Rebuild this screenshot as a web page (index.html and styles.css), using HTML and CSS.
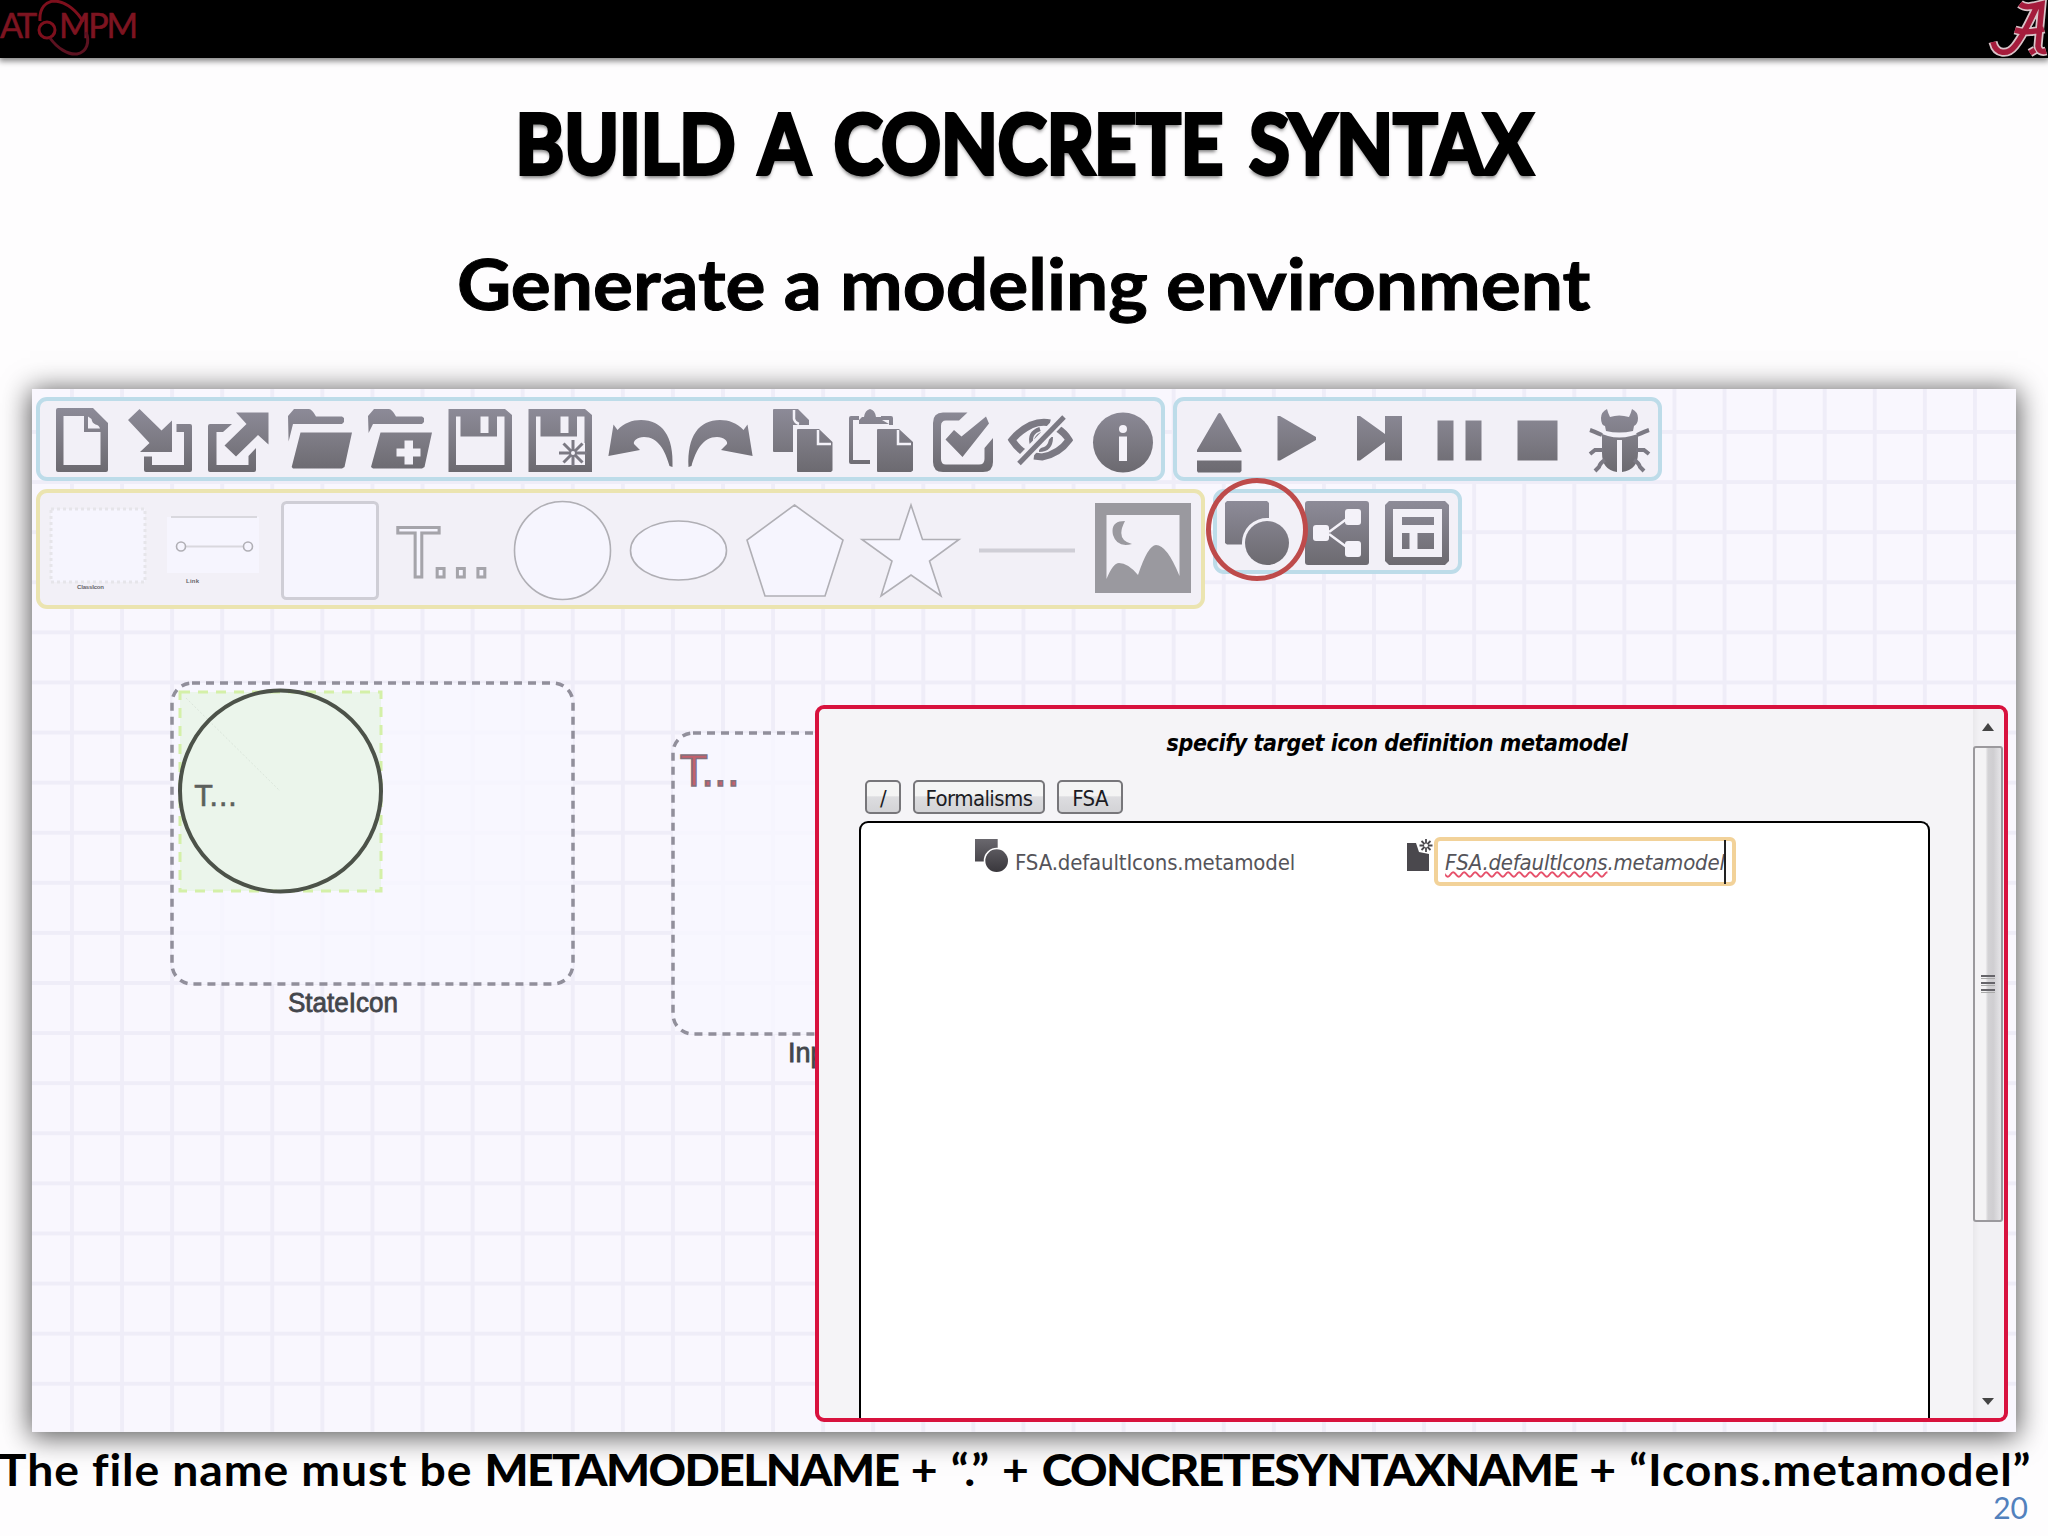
FILE: index.html
```html
<!DOCTYPE html>
<html lang="en">
  <head>
    <meta charset="UTF-8" />
    <title>Build a concrete syntax</title>
    <link rel="stylesheet" href="styles.css">
  </head>

  <body>
    <!-- shared gradients -->
    <svg class="defs" width="0" height="0">
      <defs>
        <linearGradient id="steel" gradientUnits="userSpaceOnUse" x1="0" y1="0" x2="0" y2="64">
          <stop offset="0" stop-color="#8d8b98" />
          <stop offset="1" stop-color="#6c6a70" />
        </linearGradient>
        <linearGradient id="dark" gradientUnits="userSpaceOnUse" x1="0" y1="0" x2="0" y2="64">
          <stop offset="0" stop-color="#6a686e" />
          <stop offset="1" stop-color="#39373c" />
        </linearGradient>
      </defs>
    </svg>

    <header class="topbar">
      <svg class="logo" width="144" height="58" viewBox="0 0 144 58">
        <text class="logo-text" x="0" y="38" textLength="37">AT</text>
        <text class="logo-text" x="59" y="38" textLength="79">MPM</text>
        <circle cx="47" cy="30" r="8" />
        <path d="M40 21C39 8 46 1 55 1C67 2 78 12 83 22" />
        <path class="dim" d="M50 38C57 48 68 55 77 54C87 52 90 42 86 32" />
      </svg>
      <svg class="crest" width="60" height="58" viewBox="0 0 60 58">
        <path class="crest-edge" d="M32 4C37 8 43 7 54 4L50 46Q51 53 58 51M49 6C42 21 35 36 27 46C20 55 8 55 5 42M27 30Q40 34 56 29M42 53L47 50" />
        <path class="crest-fill" d="M32 4C37 8 43 7 54 4L50 46Q51 53 58 51M49 6C42 21 35 36 27 46C20 55 8 55 5 42M27 30Q40 34 56 29M42 53L47 50" />
      </svg>
    </header>

    <h1 class="title"><span>BUILD A CONCRETE SYNTAX</span></h1>
    <h2 class="subtitle"><span>Generate a modeling environment</span></h2>

    <main class="workspace">
      <svg class="canvas" width="1984" height="1043" viewBox="32 389 1984 1043">
        <rect class="icon-box" x="172" y="683" width="401" height="301" rx="20" />
        <rect class="selection" x="180" y="692" width="201" height="199" />
        <path class="hair" d="M186 698L280 791" />
        <circle class="state" cx="280.500" cy="791" r="100.500" />
        <text class="label-t" x="195" y="806" textLength="42">T...</text>
        <text class="caption" x="288" y="1012" textLength="110" lengthAdjust="spacingAndGlyphs">StateIcon</text>
        <rect class="icon-box" x="673" y="733" width="401" height="301" rx="20" />
        <text class="label-red" x="681" y="786" textLength="59">T...</text>
        <text class="caption" x="788" y="1062">InputIcon</text>
      </svg>

      <div class="toolbars">
        <div class="row">
          <div class="toolbar main">
            <svg class="icon" viewBox="0 0 64 64"><path fill-rule="evenodd" d="M10 0H45L60 15V62Q60 64 58 64H10Q8 64 8 62V2Q8 0 10 0ZM15.500 8V57H52.500V24H36V8ZM40 8.500V20.500H52Q51 17 47.500 16.500Q44 15 43.500 11Z" /></svg>
            <svg class="icon" viewBox="0 0 64 64"><path d="M0 12L11.500 1L33.500 22.500L44 12.500V44H12L21.500 35ZM48.500 16H62Q64 16 64 18V62Q64 64 62 64H18Q16 64 16 62V48.500H24V57H56V24H48.500Z" /></svg>
            <svg class="icon" viewBox="0 0 64 64"><path d="M2 16H24L15 24H8.500V57H40.500V48L48 40V62Q48 64 46 64H2Q0 64 0 62V18Q0 16 2 16ZM28 4.500H60.500V36.500L50 27L28 48.500L16.500 37.500L38.500 16Z" /></svg>
            <svg class="icon" viewBox="0 0 64 64"><path d="M0 8L6 1H21Q24 1 28 8.500H54L56 10V14L54 16H5L.6 33.500ZM12.500 24.500H64L56.500 59L54 60.500H5L3.700 59Z" /></svg>
            <svg class="icon" viewBox="0 0 64 64"><path fill-rule="evenodd" d="M0 8L6 1H21Q24 1 28 8.500H54L56 10V14L54 16H5L.6 25ZM12.500 24.500H64L56.500 59L54 60.500H5L3 59ZM36.500 32.500V40.500H28.500V48.500H36.500V56.500H45V48.500H52.500V40.500H45V32.500Z" /></svg>
            <svg class="icon" viewBox="0 0 64 64"><path fill-rule="evenodd" d="M.5 1H57L64 7V64H.5ZM8 8.500V57H56.500V8.500H49V28.500H12.500V8.500ZM32.500 8.500V25H40.500V8.500Z" /></svg>
            <svg class="icon" viewBox="0 0 64 64">
              <path fill-rule="evenodd" d="M.5 1H57L64 7V64H.5ZM8 8.500V57H56.500V8.500H49V28.500H12.500V8.500ZM32.500 8.500V25H40.500V8.500Z" />
              <path class="paper" d="M45 32L49 36L57 35V57H36L34 45Z" />
              <path class="thin" d="M45 32V58M31 45H59M35.500 35.500L54.500 54.500M54.500 35.500L35.500 54.500" />
              <circle class="paper" cx="45" cy="45" r="2" />
            </svg>
            <svg class="icon" viewBox="0 0 64 64"><path d="M5.500 16.500L9.500 22C16 15 24 12 33 12C54 12 66 28 64.500 59L61.500 58C57 42 50 29 36 29C29 29 25 33 26 36L32 42L.4 48Z" /></svg>
            <svg class="icon" viewBox="0 0 64 64"><path transform="matrix(-1 0 0 1 65 0)" d="M5.500 16.500L9.500 22C16 15 24 12 33 12C54 12 66 28 64.500 59L61.500 58C57 42 50 29 36 29C29 29 25 33 26 36L32 42L.4 48Z" /></svg>
            <svg class="icon" viewBox="0 0 64 64">
              <path d="M6 1H30L41 12V17H25V44H6Q5 44 5 43V2Q5 1 6 1ZM30 21H51L64.500 34V62.500L63 64H30Q29 64 29 63V22Q29 21 30 21Z" />
              <path class="fold" d="M26 2V11Q27 15 31 16M50 22V36H63" />
            </svg>
            <svg class="icon" viewBox="0 0 64 64">
              <path d="M14 9H16Q17 2 22 1Q27 2 28 9H34V12L41 16H11V12Z" />
              <path d="M11 8H3Q1 8 1 10V54Q1 56 3 56H22V52H5V12H11ZM33 8H43Q45 8 45 10V17H41V12H33ZM30 21H51L65 34V62.500L63 64H30Q29 64 29 63V22Q29 21 30 21Z" />
              <path class="fold" d="M50 22V36H63" />
            </svg>
            <svg class="icon" viewBox="0 0 64 64"><path d="M39.500 4.500L31 12.500H18Q13 12.500 13 18V51Q13 56.500 18 56.500H51Q56.500 56.500 56.500 51V40L65 30V54Q65 64 55 64H15Q5 64 5 54V15Q5 4.500 15 4.500ZM17.500 31.500L26 22L33.500 28.500L58 8.500L61 15.500L34.500 49Z" /></svg>
            <svg class="icon eye" viewBox="0 0 64 64">
              <path class="stroke" stroke-width="7" d="M42 15Q33 13 23 17Q11 23 4 32Q10 41 17 45M49 20Q57 25 61 32Q51 46 34 49L26 48" />
              <path class="stroke" stroke-width="4" d="M24 37Q20 25 32 21M28 32Q30 27 34 26M31 42Q43 42 43 29M34 35L38 31" />
              <path class="gap" d="M56 8L11 55" />
              <path class="stroke" stroke-width="5" d="M56 9L11 55.500" />
            </svg>
            <svg class="icon" viewBox="0 0 64 64">
              <circle cx="35" cy="34.500" r="30" />
              <circle class="paper" cx="35" cy="21" r="4" />
              <path class="paper" d="M31 28.500H39V53H31Z" />
            </svg>
          </div>
          <div class="toolbar sim">
            <svg class="icon" viewBox="0 0 64 64"><path d="M33 6Q34.500 4 36 6L56.500 42V44H12V42ZM12 52.500H56.500V63L55 64.500H13L12 63Z" /></svg>
            <svg class="icon" viewBox="0 0 64 64"><path d="M12.500 8H15L51 29V32L15 52.500H12.500Z" /></svg>
            <svg class="icon" viewBox="0 0 64 64"><path d="M12 8H15L40 26V8H57V52.500H40V34L15 52.500H12Z" /></svg>
            <svg class="icon" viewBox="0 0 64 64"><path d="M12.500 12.500H28.500V52.500H12.500ZM40.500 12.500H56.500V52.500H40.500Z" /></svg>
            <svg class="icon" viewBox="0 0 64 64"><path d="M12.500 12.500H52.500V52.500H12.500Z" /></svg>
            <svg class="icon" viewBox="0 0 64 64">
              <path d="M22 1Q16 4 16 10Q16 17 20 18L21 23Q34 26 48 23L49 18Q53 16 53 10Q53 4 47 1Q46 5 44 9Q34 6 25 9Q23 5 22 1ZM17 26L23 28Q34 31 46 28L53 26V45Q53 62 37 64V32H32V64Q17 62 17 45Z" />
              <path class="stroke" stroke-width="4" d="M5 22Q8 23 17 27M64 22Q61 23 52 27M5 46L10 42H18M64 46L59 42H51M10 63L14 59Q15 55 20 52M59 63L55 59Q54 55 49 52" />
            </svg>
          </div>
        </div>

        <div class="row">
          <div class="toolbar shapes">
            <svg class="shape" viewBox="0 0 97 99">
              <rect class="dotted" x="2" y="8" width="94" height="73" />
              <text class="tiny" x="28" y="88" textLength="27">ClassIcon</text>
            </svg>
            <svg class="shape" viewBox="0 0 97 99">
              <path class="light" d="M2 16H94V72H2Z" />
              <path class="faint" d="M6 16H92M20 45.500H80" />
              <circle class="line" cx="16" cy="45.500" r="4.500" /><circle class="line" cx="83" cy="45.500" r="4.500" />
              <text class="tiny" x="21" y="82" textLength="13">Link</text>
            </svg>
            <svg class="shape" viewBox="0 0 97 99"><rect class="block" x="1.500" y="1.500" width="95" height="96" rx="4" /></svg>
            <svg class="shape" viewBox="0 0 97 99"><text class="outline" x="0" y="76" textLength="94">T...</text></svg>
            <svg class="shape" viewBox="0 0 97 99"><ellipse class="line" cx="48.500" cy="49.500" rx="48" ry="49" /></svg>
            <svg class="shape" viewBox="0 0 97 99"><ellipse class="line" cx="48.500" cy="49.500" rx="48" ry="29.500" /></svg>
            <svg class="shape" viewBox="0 0 97 99"><path class="line" d="M48.500 4L97 39L79 95H19L1 39Z" /></svg>
            <svg class="shape" viewBox="0 0 97 99"><path class="line" d="M49 4L60.500 38.500H97L67.500 60L79 95L49 74L19 95L30 60L0 38.500H37.500Z" /></svg>
            <svg class="shape" viewBox="0 0 97 99"><path class="bar" d="M0 49.500H96" /></svg>
            <svg class="shape" viewBox="0 0 97 99"><path class="picture" fill-rule="evenodd" d="M0 2H96V92H0ZM11.500 14V78Q18 62 24 62Q33 62 43 74Q53 44 61 44Q72 44 84.500 75V14ZM30 20Q15 20 18 34Q22 47 37 43Q20 39 30 20Z" /></svg>
          </div>
          <div class="toolbar compile">
            <svg class="icon" viewBox="0 0 64 64">
              <path d="M2 0H42L44 2V17A25 25 0 0 0 17 43.500H2L0 42V2Z" />
              <circle cx="42" cy="42" r="22" />
            </svg>
            <svg class="icon" viewBox="0 0 64 64">
              <rect width="64" height="64" rx="3" />
              <path class="fold" d="M24 31L43 17M24 33L43 47" />
              <rect class="paper" x="8" y="24" width="16" height="16" rx="3" /><rect class="paper" x="40" y="8" width="16" height="16" rx="3" /><rect class="paper" x="40" y="40" width="16" height="16" rx="3" />
            </svg>
            <svg class="icon" viewBox="0 0 64 64"><path fill-rule="evenodd" d="M4 0H60L64 4V60L60 64H4L0 60V4ZM8 8V56H57V8ZM17 16H49V24H17ZM17 32H24.500V48H17ZM32.500 32H49V48H32.500Z" /></svg>
            <div class="marker"></div>
          </div>
        </div>
      </div>

      <section class="dialog">
        <div class="dialog-body">
          <p class="dialog-title"><span>specify target icon definition metamodel</span></p>
          <nav class="path">
            <button class="btn root">/</button>
            <button class="btn formalisms">Formalisms</button>
            <button class="btn fsa">FSA</button>
          </nav>
          <div class="files">
            <div class="file">
              <svg class="file-icon" width="33" height="33" viewBox="0 0 64 64">
                <path d="M0 0H44V17A25 25 0 0 0 17 43.500H0Z" />
                <circle cx="42" cy="42" r="22" />
              </svg>
              <span class="file-name">FSA.defaultIcons.metamodel</span>
            </div>
            <div class="file new">
              <svg class="new-icon" width="26" height="32" viewBox="0 0 26 32">
                <path d="M0 4H9L12 13L22 15V32H0Z" />
                <path class="spark" d="M19 0V13M12.500 6.500H25.500M14.500 2L23.500 11M23.500 2L14.500 11" />
                <circle class="dot" cx="19" cy="6.500" r="2" />
              </svg>
              <div class="field"><span class="typed"><u>FSA.defaultIcons</u>.metamodel</span><i class="caret"></i></div>
            </div>
          </div>
        </div>
        <div class="scrollbar">
          <svg class="arrow" width="30" height="37" viewBox="0 0 30 37"><path d="M15 14L21 22H9Z" /></svg>
          <div class="thumb"><i></i><i></i><i></i></div>
          <svg class="arrow" width="30" height="37" viewBox="0 0 30 37"><path d="M15 24L21 17H9Z" /></svg>
        </div>
      </section>
    </main>

    <footer class="footer">
      <p class="note"><span>The file name must be <b>METAMODELNAME</b> + “.” + <b>CONCRETESYNTAXNAME</b> + “Icons.metamodel”</span></p>
      <span class="page">20</span>
    </footer>
  </body>
</html>
```

FILE: styles.css
```css
* {
  box-sizing: border-box;
  padding: 0;
  margin: 0;
}

body {
  display: flex;
  flex-direction: column;
  width: 2048px;
  height: 1536px;
  overflow: hidden;
  background: #fefdfe;
  color: #000;
  font-family: Lato, "Liberation Sans", sans-serif;
}

.defs {
  position: absolute;
}

/* top bar */
.topbar {
  display: flex;
  justify-content: space-between;
  height: 58px;
  background: #000;
  box-shadow: 0 2px 6px 1px rgba(0, 0, 0, 0.5);
}

.logo {
  fill: none;
  stroke: #7d0f1c;
  stroke-width: 3;
}

.logo .dim {
  stroke: #5c1220;
}

.logo .logo-text {
  fill: #7d1420;
  stroke: #7d1420;
  stroke-width: 0.6;
  font: 34px Lato, sans-serif;
}

.crest {
  fill: none;
}

.crest-edge {
  stroke: #d9c3c8;
  stroke-width: 9;
}

.crest-fill {
  stroke: #a51c3c;
  stroke-width: 5.5;
}

/* headings */
.title,
.subtitle,
.note {
  display: flex;
  justify-content: center;
  white-space: nowrap;
}

.title {
  height: 172px;
  padding-top: 34px;
  font-size: 82px;
  font-weight: bold;
  line-height: 100px;
  word-spacing: 9px;
  -webkit-text-stroke: 4px #000;
  text-shadow: 0 4px 4px rgba(0, 0, 0, 0.5);
}

.title span {
  transform: scaleX(0.9);
}

.subtitle {
  height: 159px;
  padding-top: 3px;
  font-size: 70px;
  font-weight: bold;
  line-height: 100px;
  -webkit-text-stroke: 1px #000;
}

.subtitle span {
  transform: scaleX(1.07);
}

/* workspace */
.workspace {
  position: relative;
  width: 1984px;
  height: 1043px;
  margin-left: 32px;
  background-color: #f9f7fe;
  background-image: linear-gradient(to right, #efedf8 4px, transparent 4px),
    linear-gradient(to bottom, #efedf8 4px, transparent 4px);
  background-size: 50.08px 50.1px;
  background-position: 38px 41px;
  box-shadow: 0 3px 26px 2px rgba(0, 0, 0, 0.65);
}

.canvas {
  position: absolute;
  top: 0;
  left: 0;
}

.icon-box {
  fill: rgba(247, 246, 255, 0.8);
  stroke: #918f9b;
  stroke-width: 3.5;
  stroke-dasharray: 8 6;
}

.selection {
  fill: #ebf5eb;
  stroke: #d4f0a8;
  stroke-width: 3;
  stroke-dasharray: 10 8;
}

.hair {
  stroke: #dbe5db;
  stroke-dasharray: 2 2;
}

.state {
  fill: none;
  stroke: #4c5249;
  stroke-width: 4;
}

.label-t,
.label-red {
  font: 28px "DejaVu Sans", sans-serif;
  fill: #5c605c;
  stroke: #5c605c;
  stroke-width: 0.6;
}

.label-red {
  font-size: 42px;
  fill: #c4606c;
  stroke: #85707c;
  stroke-width: 1.5;
}

.caption {
  font: 27px "Liberation Sans", sans-serif;
  fill: #44464c;
  stroke: #44464c;
  stroke-width: 0.8;
}

/* toolbars */
.toolbars {
  position: relative;
  display: flex;
  flex-direction: column;
  gap: 8px;
  padding: 8px 4px;
}

.row {
  display: flex;
  align-items: flex-start;
  gap: 8px;
}

.toolbar {
  position: relative;
  display: flex;
  gap: 16px;
  height: 84px;
  padding: 7px 8px;
  border: 4px solid #bddce9;
  border-radius: 11px;
  background: #f2f0f7;
}

.main {
  width: 1129px;
}

.sim {
  width: 489px;
}

.shapes {
  gap: 19.2px;
  width: 1169px;
  height: 120px;
  padding: 8px 9px;
  border-color: #ebe4b0;
}

.compile {
  height: 85px;
  width: 249px;
  padding: 8px;
}

.icon {
  flex: none;
  width: 64px;
  height: 64px;
  overflow: visible;
  fill: url(#steel);
}

.icon .paper {
  fill: #f4f2f9;
}

.icon .thin,
.icon .stroke {
  fill: none;
  stroke: #7b7983;
}

.icon .thin {
  stroke-width: 3;
}

.icon .fold {
  fill: none;
  stroke: #f4f2f9;
  stroke-width: 2.5;
}

.icon .gap {
  stroke: #f2f0f7;
  stroke-width: 11;
}

.shape {
  flex: none;
  width: 97px;
  height: 99px;
  overflow: visible;
  fill: #f6f5fe;
}

.shape .line {
  stroke: #b0afb5;
  stroke-width: 1.6;
}

.shape .block {
  stroke: #cfced6;
  stroke-width: 3;
}

.shape .dotted {
  stroke: #e6e5ea;
  stroke-width: 3;
  stroke-dasharray: 3 3;
}

.shape .faint {
  stroke: #d9d8de;
  stroke-width: 2;
}

.shape .bar {
  stroke: #cfced6;
  stroke-width: 4;
}

.shape .picture {
  fill: #9a999f;
}

.shape .tiny {
  font: bold 6px "Liberation Sans", sans-serif;
  fill: #66656b;
}

.shape .outline {
  font: 67px "DejaVu Sans", sans-serif;
  stroke: #a5a4aa;
  stroke-width: 3;
}

.marker {
  position: absolute;
  top: -15px;
  left: -11px;
  width: 102px;
  height: 103px;
  border: 5px solid #be4b4b;
  border-radius: 50%;
}

/* file dialog */
.dialog {
  position: absolute;
  top: 316px;
  left: 783px;
  display: flex;
  width: 1193px;
  height: 717px;
  overflow: hidden;
  border: 4px solid #d8123e;
  border-radius: 9px;
  background: #f5f4f7;
  font-family: "DejaVu Sans Condensed", "DejaVu Sans", sans-serif;
}

.dialog-body {
  display: flex;
  flex-direction: column;
  width: 1154px;
  padding: 16px 43px 0 40px;
}

.dialog-title {
  display: flex;
  justify-content: center;
  height: 55px;
  padding-left: 5px;
  font-size: 23px;
  font-style: italic;
  font-weight: bold;
  letter-spacing: -0.4px;
  line-height: 37px;
  white-space: nowrap;
}

.path {
  display: flex;
  gap: 12px;
  height: 41px;
  padding-left: 6px;
}

.btn {
  height: 34px;
  padding-top: 2px;
  border: 2px solid #77767a;
  border-radius: 5px;
  background: linear-gradient(#f4f4f4 45%, #dddde0 50%, #d3d3d6);
  color: #1c1c24;
  font-family: inherit;
  font-size: 22px;
  letter-spacing: -0.6px;
}

.root {
  width: 36px;
}

.formalisms {
  width: 132px;
}

.fsa {
  width: 66px;
}

.files {
  display: flex;
  flex: 1;
  gap: 112px;
  padding: 14px 114px 0;
  border: 2.5px solid #000;
  border-bottom: none;
  border-radius: 9px 9px 0 0;
  background: #fff;
}

.file {
  display: flex;
  gap: 7px;
  height: 49px;
}

.file-icon,
.new-icon {
  flex: none;
  margin-top: 2px;
  fill: url(#dark);
}

.new-icon {
  fill: #4a484d;
}

.spark {
  stroke: #4a484d;
  stroke-width: 1.8;
}

.dot {
  fill: #fff;
}

.file-name,
.typed {
  font-size: 22px;
  letter-spacing: -0.15px;
  line-height: 52px;
  color: #55545a;
  white-space: nowrap;
}

.new {
  gap: 1px;
}

.field {
  display: flex;
  width: 302px;
  padding-left: 7px;
  border: 4px solid #f2d299;
  border-radius: 6px;
}

.typed {
  font-style: italic;
  letter-spacing: -0.2px;
  line-height: 44px;
}

.typed u {
  text-decoration: underline wavy #e6506a 1.5px;
  text-underline-offset: 1px;
  text-decoration-skip-ink: none;
}

.caret {
  width: 2px;
  height: 44px;
  margin-top: -1px;
  margin-left: -1px;
  background: #222;
}

.scrollbar {
  display: flex;
  flex-direction: column;
  width: 30px;
  background: linear-gradient(to right, #e9e8eb, #f2f1f4 20%);
}

.arrow {
  fill: #444;
}

.thumb {
  display: flex;
  flex-direction: column;
  align-items: center;
  justify-content: center;
  gap: 3px;
  height: 476px;
  margin-bottom: 159px;
  border: 2px solid #9b999d;
  border-radius: 3px;
  background: linear-gradient(to right, #f4f3f5 40%, #d3d2d5 50%, #cfced1 70%, #e6e5e8);
}

.thumb i {
  width: 14px;
  height: 4px;
  border-top: 2px solid #66656a;
  border-bottom: 1px solid #aaa;
}

/* footer */
.footer {
  position: relative;
  flex: 1;
}

.note {
  padding: 15px 18px 0 0;
  font-size: 44px;
  font-weight: bold;
  letter-spacing: 0.85px;
  line-height: 44px;
}

.note b {
  letter-spacing: -1.5px;
}

.note span {
  transform: scaleX(1.053);
}

.page {
  position: absolute;
  right: 20px;
  bottom: 14px;
  font-size: 30px;
  line-height: 30px;
  color: #5281bd;
}
```
